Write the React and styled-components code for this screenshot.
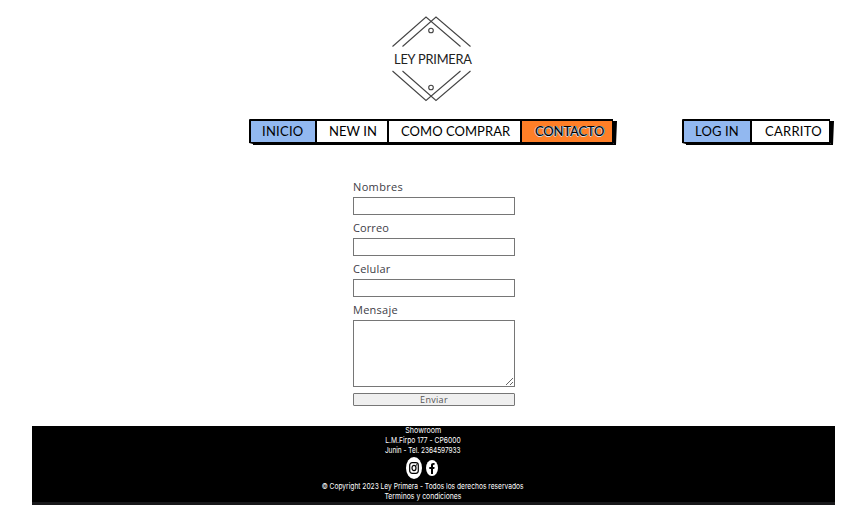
import React from "react";
import styled, { createGlobalStyle } from "styled-components";

const GlobalStyle = createGlobalStyle`
  * { box-sizing: border-box; }
  body { margin: 0; background: #fff; font-family: "Open Sans", sans-serif; }
`;

const Page = styled.div`
  display: flex;
  flex-direction: column;
  height: 520px;
  overflow: hidden;
`;

const Header = styled.header`
  display: flex;
  flex-direction: column;
  height: 180px;
  padding-top: 14px;
`;

const Logo = styled.svg`
  display: block;
  width: 88px;
  height: 90px;
  margin-left: 388px;
  fill: none;
  stroke: #444;
  stroke-width: 1.1;

  text {
    font: 12.8px Lato, sans-serif;
    fill: #222;
    stroke: none;
  }
`;

const NavRow = styled.div`
  display: flex;
  gap: 68px;
  margin: 15px 0 0 249px;
`;

const Menu = styled.nav`
  display: flex;
  height: 25px;
  border: 2px solid #000;
  border-radius: 1px;
  box-shadow: 3px 1px 0 #000;
  clip-path: polygon(0 0, calc(100% - 1px) 0, calc(100% - 1px) 2px, calc(100% + 3px) 2px, calc(100% + 2px) calc(100% + 1px), 4px calc(100% + 1px), 4px 100%, 0 calc(100% - 1px));
`;

const MenuLink = styled.a`
  width: ${(p) => p.$width}px;
  padding-left: ${(p) => p.$inset}px;
  background: ${(p) => p.$fill || "#fff"};
  color: #000;
  font: 13px/20px Lato, sans-serif;
  letter-spacing: ${(p) => p.$tracking || 0}px;
  white-space: nowrap;
  text-shadow: ${(p) => (p.$active ? "1px 0 #8fc1e8, -1px 0 #d8c4b0, 0 1px #d5dce4" : "none")};

  & + & { border-left: 2px solid #000; }
`;

const Form = styled.form`
  display: flex;
  flex-direction: column;
  width: 162px;
  height: 246px;
  margin-left: 353px;
`;

const Label = styled.label`
  height: 17px;
  color: #3d3d46;
  font-size: 11px;
  line-height: 14px;
  letter-spacing: ${(p) => p.$tracking}px;
`;

const Input = styled.input`
  width: 162px;
  height: 18px;
  margin: 0 0 6px;
  padding: 1px 2px;
  border: 1px solid #767676;
  border-radius: 0;
  background: #fff;
`;

const Message = styled.textarea`
  width: 162px;
  height: 67px;
  margin: 0 0 6px;
  padding: 2px;
  border: 1px solid #767676;
  border-radius: 0;
  background: #fff;
  resize: both;
`;

const Submit = styled.button`
  height: 13px;
  padding: 0;
  border: 1px solid #767676;
  border-radius: 1px;
  background: #efefef;
  color: #555;
  font: 9px/11px "Open Sans", sans-serif;
  letter-spacing: 0.3px;
`;

const Footer = styled.footer`
  display: flex;
  flex-direction: column;
  align-items: center;
  width: 803px;
  height: 79px;
  margin-left: 32px;
  padding-right: 21px;
  border-bottom: 3px solid #18181a;
  background: #000;
  color: #fff;
`;

const FooterLine = styled.div`
  height: 10.5px;
  font: 8px/8px Inter, sans-serif;
  white-space: nowrap;
  transform: scaleX(${(p) => p.$squeeze || 0.84});
`;

const Social = styled.div`
  display: flex;
  align-items: center;
  gap: 4px;
  height: 25px;
  margin: -1px 2px 1.5px 0;
`;

const SocialIcon = styled.svg`
  display: block;
  width: ${(p) => p.$w}px;
  height: ${(p) => p.$h}px;
`;

const mainLinks = [
  { text: "INICIO", width: 64, inset: 11, tracking: 0.25, fill: "#92b8f0" },
  { text: "NEW IN", width: 72, inset: 12, tracking: 0.05 },
  { text: "COMO COMPRAR", width: 133, inset: 12, tracking: 0.05 },
  { text: "CONTACTO", width: 92, inset: 13, tracking: -0.15, fill: "#ff7f27", active: true },
];

const accountLinks = [
  { text: "LOG IN", width: 66, inset: 11, tracking: 0.15, fill: "#92b8f0" },
  { text: "CARRITO", width: 79, inset: 13, tracking: 0.25 },
];

const fields = [
  { text: "Nombres", tracking: 0.35 },
  { text: "Correo", tracking: 0.1 },
  { text: "Celular", tracking: 0.22 },
];

const renderLinks = (links) =>
  links.map((l) => (
    <MenuLink key={l.text} $width={l.width} $inset={l.inset} $tracking={l.tracking} $fill={l.fill} $active={l.active}>
      {l.text}
    </MenuLink>
  ));

export default function App() {
  return (
    <Page>
      <GlobalStyle />
      <Header>
        <Logo viewBox="0 0 88 90">
          <path d="M4.5 32.5 38 3 72.5 32.5M14.5 32.5 48 3 82.5 32.5" />
          <path d="M4.5 57 38 86.5 72.5 57M14.5 57 48 86.5 82.5 57" />
          <circle cx="43" cy="16.5" r="2.3" />
          <circle cx="43" cy="73.5" r="2.3" />
          <text x="6" y="49.5" textLength="78">LEY PRIMERA</text>
        </Logo>
        <NavRow>
          <Menu>{renderLinks(mainLinks)}</Menu>
          <Menu>{renderLinks(accountLinks)}</Menu>
        </NavRow>
      </Header>
      <Form>
        {fields.map((f) => (
          <React.Fragment key={f.text}>
            <Label $tracking={f.tracking}>{f.text}</Label>
            <Input aria-label={f.text} />
          </React.Fragment>
        ))}
        <Label $tracking={0.25}>Mensaje</Label>
        <Message aria-label="Mensaje" />
        <Submit type="button">Enviar</Submit>
      </Form>
      <Footer>
        <FooterLine $squeeze={0.89}>Showroom</FooterLine>
        <FooterLine>L.M.Firpo 177 - CP6000</FooterLine>
        <FooterLine $squeeze={0.81}>Junin - Tel. 2364597933</FooterLine>
        <Social>
          <SocialIcon $w={16} $h={22} viewBox="0 0 16 22">
            <ellipse cx="8" cy="11" rx="8" ry="11" fill="#fff" />
            <rect x="3.7" y="5.7" width="8.6" height="10.6" rx="2.5" fill="none" stroke="#000" strokeWidth="1.2" />
            <ellipse cx="8" cy="11" rx="2" ry="2.7" fill="none" stroke="#000" strokeWidth="1.2" />
            <circle cx="10.6" cy="7.9" r="0.7" />
          </SocialIcon>
          <SocialIcon $w={12} $h={16} viewBox="0 0 12 16">
            <ellipse cx="6" cy="8" rx="6" ry="8" fill="#fff" />
            <path d="M5 14V9H3.3V7H5V5.3C5 3.5 6 2.7 8.6 3v1.8C7.4 4.7 7 5 7 5.9V7h1.6l-.3 2H7v5z" />
          </SocialIcon>
        </Social>
        <FooterLine $squeeze={0.83}>© Copyright 2023 Ley Primera - Todos los derechos reservados</FooterLine>
        <FooterLine $squeeze={0.857}>Terminos y condiciones</FooterLine>
      </Footer>
    </Page>
  );
}
